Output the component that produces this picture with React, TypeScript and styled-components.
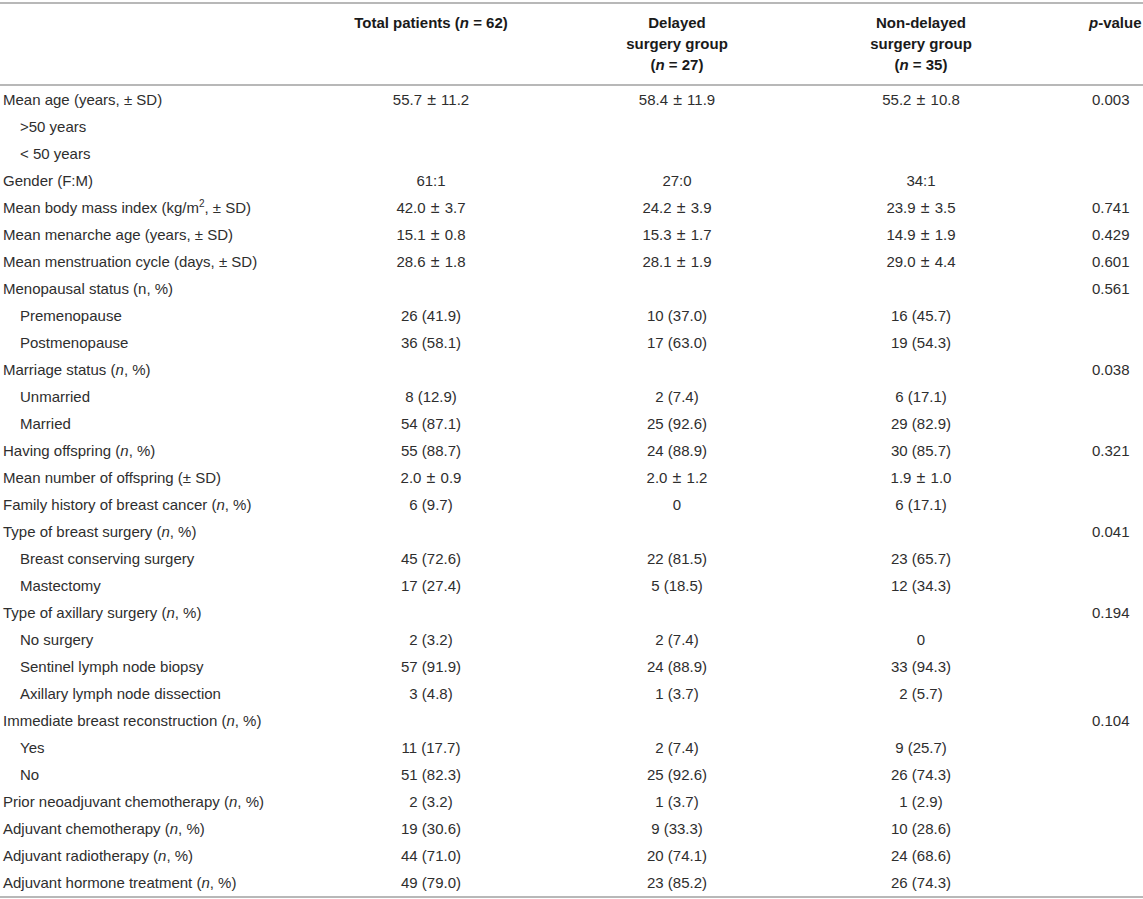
import React from "react";
import styled, { createGlobalStyle } from "styled-components";

const Global = createGlobalStyle`
  html, body { margin: 0; padding: 0; background: #fff; }
  body { font-family: "Liberation Sans", Arial, Helvetica, sans-serif; color: #2e2e2e; }
`;

const Page = styled.div`
  width: 1143px;
  padding-top: 2px;
`;

const Table = styled.table`
  width: 1143px;
  border-collapse: collapse;
  table-layout: fixed;
  font-size: 15px;
  border-top: 2px solid #b8b8b8;
  border-bottom: 2px solid #b8b8b8;
`;

const HeadCell = styled.th<{ $align?: string; $pl?: number }>`
  font-weight: bold;
  color: #1a1a1a;
  line-height: 21px;
  vertical-align: top;
  white-space: nowrap;
  padding: 8px 0 9px ${(p) => p.$pl ?? 0}px;
  text-align: ${(p) => p.$align ?? "center"};
  border-bottom: 2px solid #b8b8b8;
`;

const Cell = styled.td<{ $align?: string; $pl?: number }>`
  line-height: 19px;
  padding: 4px 0 4px ${(p) => p.$pl ?? 0}px;
  text-align: ${(p) => p.$align ?? "center"};
  white-space: pre;
  color: #2e2e2e;
`;

const LabelCell = styled(Cell)<{ $indent?: boolean }>`
  text-align: left;
  padding-left: ${(p) => (p.$indent ? 20 : 3)}px;
`;

const Sup = styled.sup`
  font-size: 10px;
  line-height: 0;
`;

const Pm = styled.span`
  display: inline-block;
  margin: 0 1px;
  font-size: 16px;
  line-height: 0;
`;

type Row = {
  label: React.ReactNode;
  indent?: boolean;
  v?: [string, string, string];
  p?: string;
};

const N = () => <i>n</i>;

const Value = ({ text }: { text: string }) => {
  const parts = text.split(" ± ");
  if (parts.length < 2) return <>{text}</>;
  return (
    <>
      {parts[0] + " "}
      <Pm>±</Pm>
      {" " + parts[1]}
    </>
  );
};

const rows: Row[] = [
  { label: "Mean age (years, ± SD)", v: ["55.7 ± 11.2", "58.4 ± 11.9", "55.2 ± 10.8"], p: "0.003" },
  { label: ">50 years", indent: true },
  { label: "< 50 years", indent: true },
  { label: "Gender (F:M)", v: ["61:1", "27:0", "34:1"] },
  {
    label: (
      <>
        Mean body mass index (kg/m<Sup>2</Sup>, ± SD)
      </>
    ),
    v: ["42.0 ± 3.7", "24.2 ± 3.9", "23.9 ± 3.5"],
    p: "0.741",
  },
  { label: "Mean menarche age (years, ± SD)", v: ["15.1 ± 0.8", "15.3 ± 1.7", "14.9 ± 1.9"], p: "0.429" },
  { label: "Mean menstruation cycle (days, ± SD)", v: ["28.6 ± 1.8", "28.1 ± 1.9", "29.0 ± 4.4"], p: "0.601" },
  { label: "Menopausal status (n, %)", p: "0.561" },
  { label: "Premenopause", indent: true, v: ["26 (41.9)", "10 (37.0)", "16 (45.7)"] },
  { label: "Postmenopause", indent: true, v: ["36 (58.1)", "17 (63.0)", "19 (54.3)"] },
  { label: <>Marriage status (<N />, %)</>, p: "0.038" },
  { label: "Unmarried", indent: true, v: ["8 (12.9)", "2 (7.4)", "6 (17.1)"] },
  { label: "Married", indent: true, v: ["54 (87.1)", "25 (92.6)", "29 (82.9)"] },
  { label: <>Having offspring (<N />, %)</>, v: ["55 (88.7)", "24 (88.9)", "30 (85.7)"], p: "0.321" },
  { label: "Mean number of offspring (± SD)", v: ["2.0 ± 0.9", "2.0 ± 1.2", "1.9 ± 1.0"] },
  { label: <>Family history of breast cancer (<N />, %)</>, v: ["6 (9.7)", "0", "6 (17.1)"] },
  { label: <>Type of breast surgery (<N />, %)</>, p: "0.041" },
  { label: "Breast conserving surgery", indent: true, v: ["45 (72.6)", "22 (81.5)", "23 (65.7)"] },
  { label: "Mastectomy", indent: true, v: ["17 (27.4)", "5 (18.5)", "12 (34.3)"] },
  { label: <>Type of axillary surgery (<N />, %)</>, p: "0.194" },
  { label: "No surgery", indent: true, v: ["2 (3.2)", "2 (7.4)", "0"] },
  { label: "Sentinel lymph node biopsy", indent: true, v: ["57 (91.9)", "24 (88.9)", "33 (94.3)"] },
  { label: "Axillary lymph node dissection", indent: true, v: ["3 (4.8)", "1 (3.7)", "2 (5.7)"] },
  { label: <>Immediate breast reconstruction (<N />, %)</>, p: "0.104" },
  { label: "Yes", indent: true, v: ["11 (17.7)", "2 (7.4)", "9 (25.7)"] },
  { label: "No", indent: true, v: ["51 (82.3)", "25 (92.6)", "26 (74.3)"] },
  { label: <>Prior neoadjuvant chemotherapy (<N />, %)</>, v: ["2 (3.2)", "1 (3.7)", "1 (2.9)"] },
  { label: <>Adjuvant chemotherapy (<N />, %)</>, v: ["19 (30.6)", "9 (33.3)", "10 (28.6)"] },
  { label: <>Adjuvant radiotherapy (<N />, %)</>, v: ["44 (71.0)", "20 (74.1)", "24 (68.6)"] },
  { label: <>Adjuvant hormone treatment (<N />, %)</>, v: ["49 (79.0)", "23 (85.2)", "26 (74.3)"] },
];

export default function App() {
  return (
    <>
      <Global />
      <Page>
        <Table>
          <colgroup>
            <col style={{ width: 310 }} />
            <col style={{ width: 242 }} />
            <col style={{ width: 250 }} />
            <col style={{ width: 238 }} />
            <col style={{ width: 103 }} />
          </colgroup>
          <thead>
            <tr>
              <HeadCell />
              <HeadCell>
                Total patients (<i>n</i> = 62)
              </HeadCell>
              <HeadCell>
                Delayed
                <br />
                surgery group
                <br />(<i>n</i> = 27)
              </HeadCell>
              <HeadCell>
                Non-delayed
                <br />
                surgery group
                <br />(<i>n</i> = 35)
              </HeadCell>
              <HeadCell $align="left" $pl={49}>
                <i>p</i>-value
              </HeadCell>
            </tr>
          </thead>
          <tbody>
            {rows.map((r, i) => (
              <tr key={i}>
                <LabelCell $indent={r.indent}>{r.label}</LabelCell>
                <Cell>{r.v ? <Value text={r.v[0]} /> : ""}</Cell>
                <Cell>{r.v ? <Value text={r.v[1]} /> : ""}</Cell>
                <Cell>{r.v ? <Value text={r.v[2]} /> : ""}</Cell>
                <Cell $align="left" $pl={52}>
                  {r.p ?? ""}
                </Cell>
              </tr>
            ))}
          </tbody>
        </Table>
      </Page>
    </>
  );
}
